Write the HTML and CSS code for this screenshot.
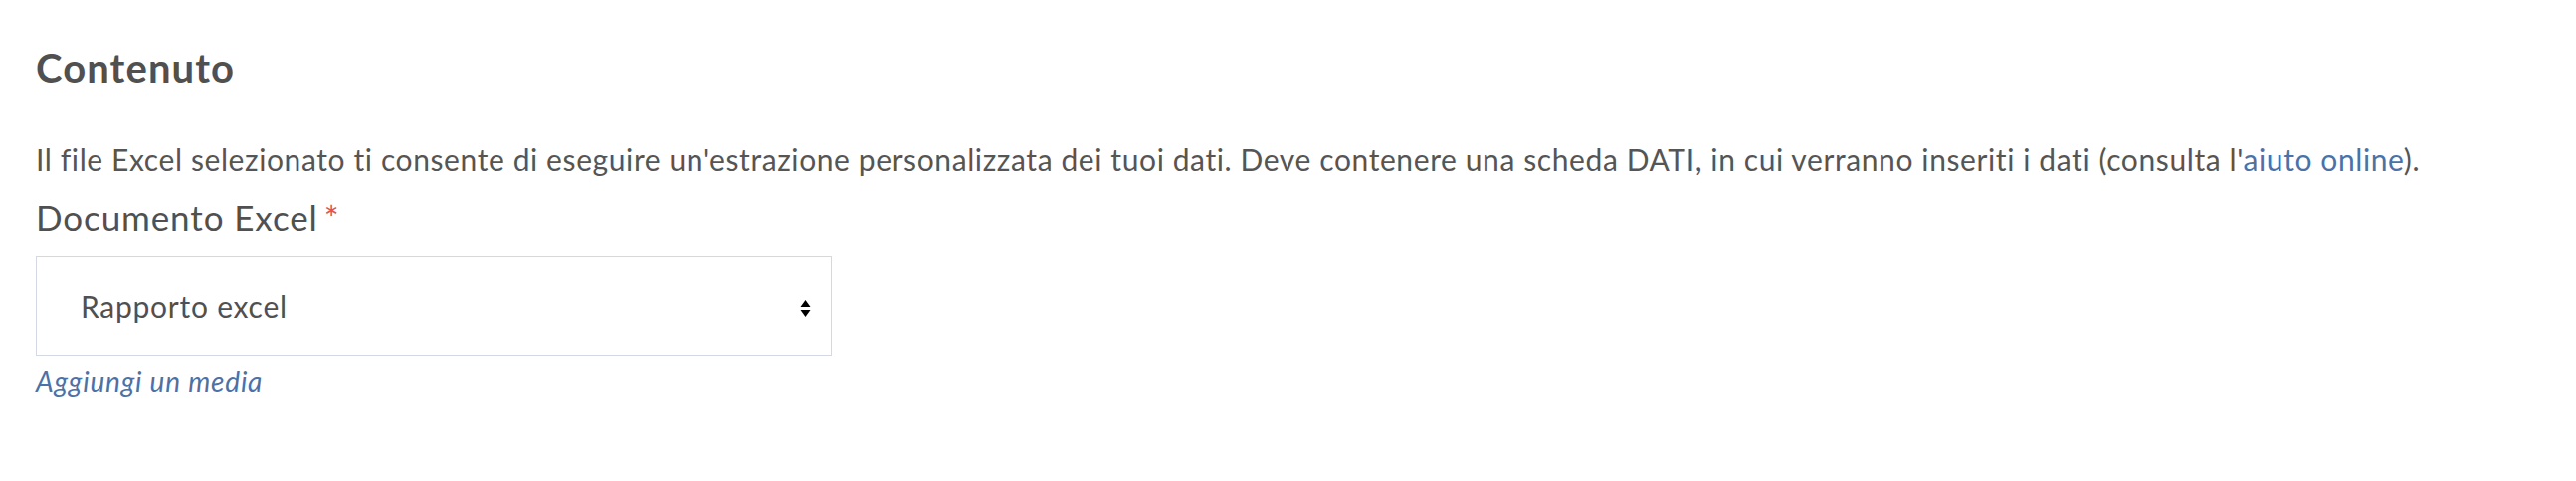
FILE: index.html
```html
<!DOCTYPE html>
<html lang="it">
<head>
  <meta charset="UTF-8" />
  <title>Contenuto</title>
  <link rel="stylesheet" href="styles.css">
</head>
<body>

<section class="content">
  <h2 class="title">Contenuto</h2>

  <p class="intro">Il file Excel selezionato ti consente di eseguire un'estrazione personalizzata dei tuoi dati. Deve contenere una scheda DATI, in cui verranno inseriti i dati (consulta l'<a href="#">aiuto online</a>).</p>

  <label class="field-label">Documento Excel<span class="required">*</span></label>

  <div class="select-box">
    <span class="select-value">Rapporto excel</span>
    <svg class="select-arrows" width="11" height="19" viewBox="0 0 11 19">
      <polygon points="5.5,1 10.5,8 0.5,8" fill="#000"/>
      <polygon points="0.5,11 10.5,11 5.5,18" fill="#000"/>
    </svg>
  </div>

  <a class="add-media" href="#">Aggiungi un media</a>
</section>

</body>
</html>
```

FILE: styles.css
```css
body {
  margin: 0;
  font-family: Lato, "Open Sans", sans-serif;
  color: #555555;
  background: #ffffff;
}

.content {
  padding: 0 36px;
}

.title {
  margin: 44px 0 0;
  font-size: 40px;
  line-height: 48px;
  font-weight: bold;
  letter-spacing: 1.1px;
  color: #505050;
}

.intro {
  margin: 50px 0 0;
  font-size: 30px;
  line-height: 36px;
  letter-spacing: 0.6px;
}

.intro a {
  color: #4a72a8;
  text-decoration: none;
}

.field-label {
  display: block;
  margin-top: 19px;
  font-size: 35px;
  line-height: 42px;
  letter-spacing: 0.9px;
  color: #505050;
}

.required {
  color: #e0544f;
  margin-left: 6px;
}

.select-box {
  display: flex;
  align-items: center;
  justify-content: space-between;
  box-sizing: border-box;
  width: 800px;
  height: 100px;
  margin-top: 18px;
  padding: 0 20px 0 44px;
  border: 1px solid #d3d8e2;
  background: #ffffff;
  font-size: 30px;
  letter-spacing: 0.75px;
  color: #505050;
}

.select-arrows {
  display: block;
  margin-top: 4px;
}

.add-media {
  display: inline-block;
  margin-top: 10px;
  font-size: 28px;
  line-height: 32px;
  font-style: italic;
  letter-spacing: 0.8px;
  color: #4a72a8;
  text-decoration: none;
}
```
